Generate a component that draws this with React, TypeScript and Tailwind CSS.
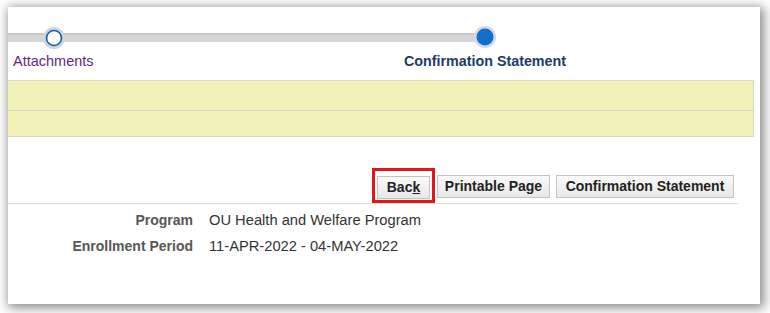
const font = { fontFamily: '"Liberation Sans", Arial, sans-serif' }

function TrainLine() {
  return (
    <svg width="752" height="44" viewBox="0 0 752 44" className="block">
      <rect x="0" y="26" width="477" height="9" fill="#d6d6d6" />
      <rect x="0" y="26" width="477" height="2" fill="#c6c6c6" />
      <circle cx="46" cy="31" r="11" fill="#cdd5dd" />
      <circle cx="46" cy="31" r="7.5" fill="#ffffff" stroke="#1b5c9e" strokeWidth="1.6" />
      <circle cx="477" cy="30" r="11" fill="#d3d9de" />
      <circle cx="477" cy="30" r="8.5" fill="#0f6fcf" />
    </svg>
  )
}

function Button({ width, children, className = '' }: { width: string; children: React.ReactNode; className?: string }) {
  return (
    <button
      className={`${width} h-[23px] border border-[#c4c4c4] bg-gradient-to-b from-[#fafafa] to-[#e8e8e8] text-center text-[14px] font-bold leading-[21px] text-[#222] ${className}`}
    >
      {children}
    </button>
  )
}

export default function App() {
  return (
    <div className="h-[313px] w-[770px] overflow-hidden bg-white pl-[8px] pt-[7px]" style={font}>
      <div className="h-[297px] w-[752px] bg-white shadow-[2px_2px_10px_2px_rgba(0,0,0,0.45)]">
        <TrainLine />

        <div className="grid h-[20px] grid-cols-[377px_200px] items-center leading-[20px]">
          <span className="pl-[5px] text-[14.5px] text-[#5e2a84]">Attachments</span>
          <span className="text-center text-[14.3px] font-bold text-[#1d3a68]">Confirmation Statement</span>
        </div>

        <div className="mt-[9px] w-[746px] border-y border-r border-[#d8d8d0] bg-[#f2f2b9]">
          <div className="h-[30px] border-b border-[#d8d8c8]" />
          <div className="h-[25px]" />
        </div>

        <div className="mt-[31px] flex w-[726px] items-start justify-end">
          <div className="border-[3px] border-[#e5141b] px-[2px] pb-[1px] pt-[4px]">
            <Button width="w-[53px]">
              Bac<span className="underline">k</span>
            </Button>
          </div>
          <Button width="w-[113px]" className="ml-[2px] mt-[7px]">
            Printable Page
          </Button>
          <Button width="w-[178px]" className="ml-[6px] mt-[7px]">
            Confirmation Statement
          </Button>
        </div>

        <div className="w-[730px] border-b border-[#dcdcdc]" />

        <div className="mt-[3px] flex flex-col text-[14px]">
          <div className="flex h-[26px] items-center">
            <span className="w-[185px] text-right font-bold text-[#575757]">Program</span>
            <span className="ml-[16px] text-[14.7px] text-[#333]">OU Health and Welfare Program</span>
          </div>
          <div className="flex h-[26px] items-center">
            <span className="w-[185px] text-right font-bold text-[#575757]">Enrollment Period</span>
            <span className="ml-[16px] text-[14.7px] text-[#333]">11-APR-2022 - 04-MAY-2022</span>
          </div>
        </div>
      </div>
    </div>
  )
}
